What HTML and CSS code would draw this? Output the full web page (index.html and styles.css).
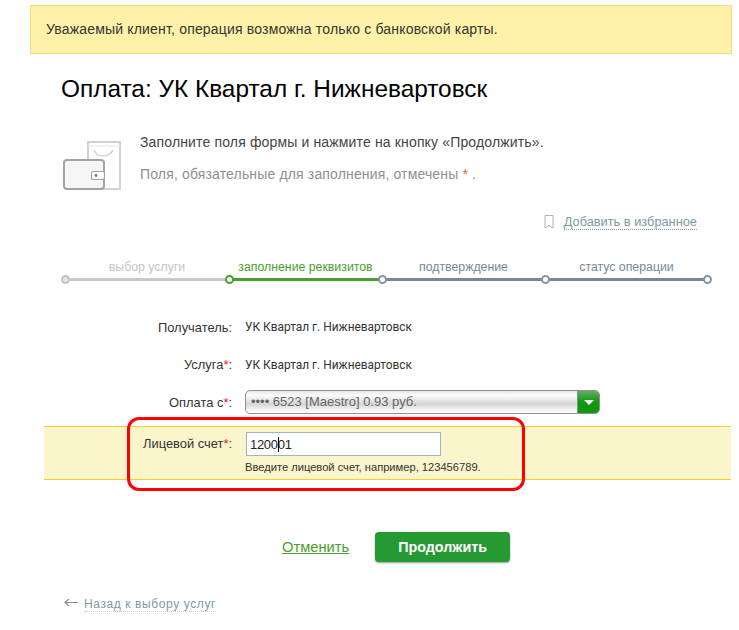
FILE: index.html
```html
<!DOCTYPE html>
<html lang="ru">
<head>
  <meta charset="UTF-8" />
  <title>Оплата: УК Квартал г. Нижневартовск</title>
  <link rel="stylesheet" href="styles.css">
</head>
<body>
  <div class="alert">Уважаемый клиент, операция возможна только с банковской карты.</div>

  <h1>Оплата: УК Квартал г. Нижневартовск</h1>

  <div class="intro">
    <svg class="wallet" width="62" height="50" viewBox="0 0 62 50">
      <path d="M25 1h32v47H25z" fill="#fff" stroke="#d2d2d2" stroke-width="2"/>
      <path d="M25 5h32" stroke="#e2e2e2" stroke-width="1"/>
      <path d="M31 9c3 8 15 8 19 0" fill="none" stroke="#d2d2d2" stroke-width="1.5"/>
      <rect x="1" y="19" width="40" height="29" rx="3" fill="#f6f6f6" stroke="#a3a3a3" stroke-width="2"/>
      <rect x="28.5" y="30.5" width="13" height="8" rx="2" fill="#fff" stroke="#a3a3a3" stroke-width="1.2"/>
      <circle cx="33" cy="34.5" r="1.4" fill="#777"/>
    </svg>
    <div class="intro-text">
      <p>Заполните поля формы и нажмите на кнопку «Продолжить».</p>
      <p class="muted">Поля, обязательные для заполнения, отмечены <span class="star">*</span> .</p>
    </div>
  </div>

  <div class="fav">
    <svg width="10" height="14" viewBox="0 0 10 14"><path d="M1 .5h8v12.5L5 10.5 1 13z" fill="none" stroke="#a9b4b8"/></svg>
    <a href="#">Добавить в избранное</a>
  </div>

  <div class="steps">
    <div class="step step-done" style="width: 164px"><span>выбор услуги</span></div>
    <div class="step step-current" style="width: 153px"><span>заполнение реквизитов</span></div>
    <div class="step" style="width: 163px"><span>подтверждение</span></div>
    <div class="step step-last" style="width: 163px"><span>статус операции</span></div>
  </div>

  <div class="form">
    <div class="row">
      <label>Получатель:</label>
      <div class="value">УК Квартал г. Нижневартовск</div>
    </div>
    <div class="row row-short">
      <label>Услуга<span class="req">*</span>:</label>
      <div class="value">УК Квартал г. Нижневартовск</div>
    </div>
    <div class="row">
      <label>Оплата с<span class="req">*</span>:</label>
      <div class="select">
        <span class="select-text">•••• 6523 [Maestro] 0.93 руб.</span>
        <span class="select-btn"><i></i></span>
      </div>
    </div>
    <div class="band">
      <div class="band-row">
        <label>Лицевой счет<span class="req">*</span>:</label>
        <div class="field">
          <div class="input-wrap">
            <input type="text" value="120001" />
            <span class="caret"></span>
          </div>
          <div class="hint">Введите лицевой счет, например, 123456789.</div>
        </div>
      </div>
      <div class="callout"></div>
    </div>
  </div>

  <div class="actions">
    <a class="cancel" href="#">Отменить</a>
    <button>Продолжить</button>
  </div>

  <div class="back">
    <svg width="14" height="9" viewBox="0 0 14 9"><path d="M14 4.5H1M5 1 1 4.5 5 8" fill="none" stroke="#8a8a8a" stroke-width="1.2"/></svg>
    <a href="#">Назад к выбору услуг</a>
  </div>
</body>
</html>
```

FILE: styles.css
```css
body {
  margin: 0;
  background-color: #fff;
  color: #333;
  font-family: "Liberation Sans", Arial, sans-serif;
  font-size: 14px;
}
.alert {
  margin: 5px 7px 0 30px;
  height: 47px;
  line-height: 47px;
  padding-left: 15px;
  background-color: #fff1a8;
  border: 1px solid #f7d97e;
  color: #333;
  letter-spacing: 0.18px;
}
h1 {
  margin: 20px 0 0 61px;
  font-size: 24.4px;
  line-height: 30px;
  font-weight: normal;
  color: #000;
}
.intro {
  display: flex;
  margin: 30px 0 0 63px;
  height: 60px;
}
.wallet {
  margin-top: 7px;
}
.intro-text {
  margin-left: 15px;
}
.intro-text p {
  margin: 0 0 16px;
  line-height: 16px;
  color: #444;
  letter-spacing: 0.15px;
}
.intro-text .muted {
  color: #8f8f8f;
}
.star {
  color: #f0562e;
}
.fav {
  display: flex;
  align-items: center;
  justify-content: flex-end;
  gap: 10px;
  margin: 19px 42px 0 0;
  height: 18px;
  font-size: 12.8px;
}
.fav a {
  color: #7d9aa5;
  text-decoration: none;
  border-bottom: 1px dotted #7d9aa5;
  line-height: 14px;
}
.steps {
  display: flex;
  margin: 28px 0 0 65px;
}
.step {
  position: relative;
  height: 30px;
  font-size: 12.3px;
  text-align: center;
  color: #74889a;
}
.step span {
  display: block;
  line-height: 16px;
}
.step::before {
  content: "";
  position: absolute;
  left: 0;
  right: 0;
  top: 19px;
  height: 3px;
  background-color: #74889a;
}
.step::after {
  content: "";
  position: absolute;
  left: -4px;
  top: 16px;
  width: 5px;
  height: 5px;
  background-color: #fff;
  border: 2px solid #8594a2;
  border-radius: 50%;
}
.step-done {
  color: #c4c4c4;
}
.step-done::before {
  background-color: #c9c9c9;
}
.step-done::after {
  border-color: #c4c4c4;
  background-color: #e4e4e4;
}
.step-current {
  color: #4a9e2f;
}
.step-current::before {
  background-color: #48a02c;
}
.step-current::after {
  border-color: #48a02c;
}
/* последний кружок в конце линии */
.step-last span::after {
  content: "";
  position: absolute;
  right: -4px;
  top: 16px;
  width: 5px;
  height: 5px;
  background-color: #fff;
  border: 2px solid #8594a2;
  border-radius: 50%;
  z-index: 1;
}
.form {
  margin-top: 19px;
  font-size: 12.9px;
}
.row {
  display: flex;
  align-items: center;
  height: 38px;
}
.row-short {
  height: 37px;
}
label {
  width: 232px;
  text-align: right;
  color: #333;
}
.req {
  color: #f01010;
}
.value {
  margin-left: 13px;
  font-family: Roboto, sans-serif;
  font-size: 11.9px;
  color: #333;
}
.select {
  display: flex;
  justify-content: space-between;
  margin-left: 13px;
  width: 355px;
  height: 24px;
  box-sizing: border-box;
  border: 1px solid #909090;
  border-radius: 5px;
  background: linear-gradient(#e8e8e8, #fbfbfb 20%, #d6d6d6 60%, #f4f4f4 85%, #fff);
  overflow: hidden;
  font-size: 13px;
}
.select-text {
  padding-left: 5px;
  line-height: 22px;
  color: #666;
}
.select-btn {
  display: flex;
  align-items: center;
  justify-content: center;
  width: 21px;
  background: linear-gradient(#68ab62, #0b9a10 50%, #0a9a0c);
  border-left: 1px solid #7a9a7a;
}
.select-btn i {
  width: 0;
  height: 0;
  border-left: 5px solid transparent;
  border-right: 5px solid transparent;
  border-top: 5px solid #fff;
}
.band {
  position: relative;
  margin: 5px 8px 0 44px;
  height: 52px;
  background-color: #fbf5cc;
  border-top: 1px solid #fdcc2b;
  border-bottom: 1px solid #fdcc2b;
}
.band-row {
  display: flex;
  padding-top: 5px;
}
.band-row label {
  width: 188px;
  line-height: 24px;
}
.field {
  margin-left: 14px;
}
.input-wrap {
  position: relative;
  width: 195px;
}
input {
  display: block;
  width: 195px;
  height: 24px;
  box-sizing: border-box;
  padding: 0 3px;
  border: 1px solid #9fb3c4;
  font-family: "Liberation Sans", Arial, sans-serif;
  font-size: 13px;
  letter-spacing: -0.3px;
  color: #222;
  outline: none;
}
.caret {
  position: absolute;
  left: 32px;
  top: 5px;
  width: 1px;
  height: 15px;
  background-color: #000;
}
.hint {
  margin: 5px 0 0 -1px;
  font-size: 11.15px;
  line-height: 12px;
  color: #333;
}
/* красная рамка поверх поля */
.callout {
  position: absolute;
  left: 83px;
  top: -10px;
  width: 392px;
  height: 68px;
  border: 3px solid #f00;
  border-radius: 12px;
}
.actions {
  display: flex;
  align-items: center;
  margin: 52px 0 0 282px;
}
.cancel {
  color: #4a9e2f;
  font-size: 14.7px;
}
button {
  margin-left: 26px;
  width: 135px;
  height: 30px;
  border: 0;
  border-radius: 4px;
  background-color: #259a33;
  box-shadow: 0 1px 2px rgba(0, 0, 0, 0.4);
  color: #fff;
  font-family: "Liberation Sans", Arial, sans-serif;
  font-size: 14.3px;
  font-weight: bold;
}
.back {
  display: flex;
  align-items: center;
  gap: 6px;
  margin: 35px 0 0 64px;
}
.back svg {
  margin-top: -5px;
}
.back a {
  color: #7d9aa5;
  font-size: 12px;
  letter-spacing: 0.6px;
  text-decoration: none;
  border-bottom: 1px dotted #c4d0d5;
}
```
